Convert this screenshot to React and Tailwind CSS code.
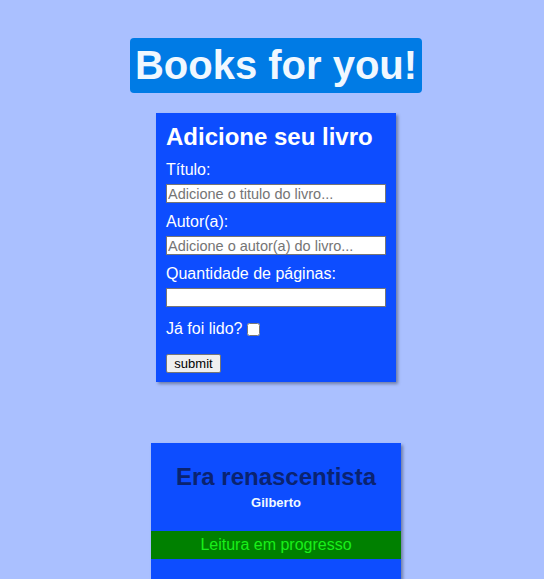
export default function App() {
  return (
    <div
      className="min-h-[579px] bg-[#aac0ff] flex flex-col items-center pl-[8px] pt-[38px] pb-10"
      style={{ fontFamily: '"Liberation Sans", Arial, sans-serif' }}
    >
      {/* Header */}
      <h1 className="rounded bg-[#007be5] px-[5px] py-[4px] text-[40px] leading-[47px] font-bold text-[#f0f8ff]">
        Books for you!
      </h1>

      {/* Form */}
      <form
        className="mt-[20px] w-[240px] bg-[#0d4dff] px-[10px] pt-[10px] pb-[9px] text-white shadow-[2px_2px_3px_rgba(0,0,0,0.35)]"
        onSubmit={(e) => e.preventDefault()}
      >
        <h2 className="text-[24px] leading-[28px] font-bold">Adicione seu livro</h2>
        <label className="mt-[10px] block text-[16px] leading-[18px]">Título:</label>
        <input
          type="text"
          placeholder="Adicione o titulo do livro..."
          className="mt-[5px] block h-[19px] w-[220px] border border-[#767676] bg-white px-[1px] text-[14.5px] leading-[17px] text-black placeholder-[#757575] outline-none"
        />
        <label className="mt-[10px] block text-[16px] leading-[18px]">Autor(a):</label>
        <input
          type="text"
          placeholder="Adicione o autor(a) do livro..."
          className="mt-[5px] block h-[19px] w-[220px] border border-[#767676] bg-white px-[1px] text-[14.5px] leading-[17px] text-black placeholder-[#757575] outline-none"
        />
        <label className="mt-[10px] block text-[16px] leading-[18px]">Quantidade de páginas:</label>
        <input
          type="number"
          className="mt-[5px] block h-[19px] w-[220px] border border-[#767676] bg-white px-[1px] text-[14.5px] text-black outline-none"
        />
        <div className="mt-[13px] flex items-center text-[16px] leading-[18px]">
          <span>Já foi lido?</span>
          <input type="checkbox" className="ml-[4px] h-[13px] w-[13px]" />
        </div>
        <button
          type="submit"
          className="mt-[16px] block h-[19px] w-[55px] rounded-[2px] border border-[#767676] bg-[#efefef] text-[13px] leading-[16px] text-black"
        >
          submit
        </button>
      </form>

      {/* Book card */}
      <div className="mt-[61px] w-[250px] bg-[#0d4dff] pt-[20px] pb-[30px] text-center shadow-[2px_2px_3px_rgba(0,0,0,0.35)]">
        <h3 className="text-[24px] leading-[28px] font-bold text-[#0a2370]">Era renascentista</h3>
        <p className="mt-[4px] text-[13px] leading-[15px] font-bold text-[#f0f8ff]">Gilberto</p>
        <div className="mt-[21px] h-[28px] bg-[#008000] text-[16px] leading-[28px] text-[#1aef1a]">
          Leitura em progresso
        </div>
        <div className="h-[60px]" />
      </div>
    </div>
  );
}
